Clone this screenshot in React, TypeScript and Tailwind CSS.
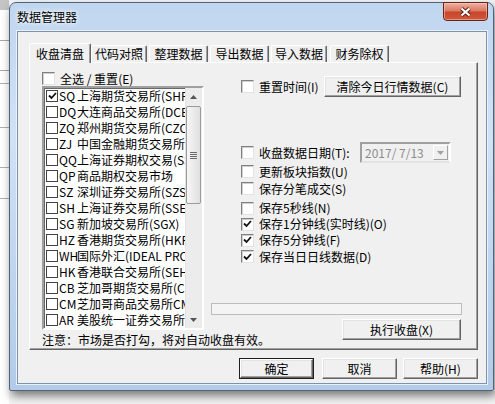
import type { ReactNode } from "react";

const markets: [string, string, boolean][] = [
  ["SQ", "上海期货交易所(SHFE)", true],
  ["DQ", "大连商品交易所(DCE)", false],
  ["ZQ", "郑州期货交易所(CZCE)", false],
  ["ZJ", "中国金融期货交易所(CFFEX)", false],
  ["QQ", "上海证券期权交易(SSE)", false],
  ["QP", "商品期权交易市场", false],
  ["SZ", "深圳证券交易所(SZSE)", false],
  ["SH", "上海证券交易所(SSE)", false],
  ["SG", "新加坡交易所(SGX)", false],
  ["HZ", "香港期货交易所(HKFE)", false],
  ["WH", "国际外汇(IDEAL PRO)", false],
  ["HK", "香港联合交易所(SEHK)", false],
  ["CB", "芝加哥期货交易所(CBOT)", false],
  ["CM", "芝加哥商品交易所CME", false],
  ["AR", "美股统一证券交易所", false],
];

const tabs = [
  { label: "代码对照", cls: "w-[56px]" },
  { label: "整理数据", cls: "ml-[2px] w-[59px]" },
  { label: "导出数据", cls: "ml-[2px] w-[59px]" },
  { label: "导入数据", cls: "ml-[2px] w-[56px]" },
  { label: "财务除权", cls: "ml-[3px] w-[59px]" },
];

function Tick() {
  return (
    <svg width="9" height="8" viewBox="0 0 9 8">
      <path d="M1 3.5 L3.5 6 L8 1" fill="none" stroke="#111" strokeWidth="1.8" />
    </svg>
  );
}

function Box3D({ checked }: { checked?: boolean }) {
  return (
    <span className="flex h-[13px] w-[13px] shrink-0 items-center justify-center border border-t-[#808080] border-l-[#808080] border-r-[#e3e3e3] border-b-[#e3e3e3] bg-white shadow-[inset_1px_1px_0_#d0d0d0]">
      {checked && <Tick />}
    </span>
  );
}

function Btn({ children, className = "" }: { children: ReactNode; className?: string }) {
  return (
    <div
      className={`flex items-center justify-center whitespace-nowrap border border-t-white border-l-white border-r-[#646464] border-b-[#646464] bg-[#f0f0f0] shadow-[inset_-1px_-1px_0_#a0a0a0,inset_1px_1px_0_#e3e3e3] ${className}`}
    >
      {children}
    </div>
  );
}

function Opt({ label, checked, cls }: { label: string; checked?: boolean; cls: string }) {
  return (
    <div className={`flex items-center ${cls}`}>
      <Box3D checked={checked} />
      <span className="ml-[5px] whitespace-nowrap">{label}</span>
    </div>
  );
}

function Arrow({ up, color = "#555" }: { up?: boolean; color?: string }) {
  return (
    <svg width="7" height="4" viewBox="0 0 7 4">
      <path d={up ? "M0 4 L3.5 0 L7 4 Z" : "M0 0 L7 0 L3.5 4 Z"} fill={color} />
    </svg>
  );
}

export default function App() {
  return (
    <div className="flex h-[404px] w-[495px] overflow-hidden bg-[#f4f4f4] font-['Noto_Sans_CJK_SC','Noto_Sans',sans-serif] text-[12px] leading-[14px] text-black">
      {/* window behind */}
      <div className="flex h-full w-[9px] shrink-0 flex-col bg-white">
        <div className="h-[10px] bg-[#c4c4c4]" />
        <div className="mt-[30px] h-px bg-[#a8a8a8]" />
        <div className="mt-[29px] h-px bg-[#a8a8a8]" />
        <div className="mt-[12px] h-px bg-[#b0b0b0]" />
        <div className="mt-[43px] h-px bg-[#b0b0b0]" />
        <div className="mt-[39px] h-px bg-[#b0b0b0]" />
        <div className="mt-[30px] h-px bg-[#b0b0b0]" />
      </div>

      <div className="pt-[2px]">
        <div className="flex h-[389px] w-[485px] flex-col rounded-t-[7px] rounded-b-[2px] border border-[#4f6379] bg-[linear-gradient(180deg,#c0d6ef_0%,#d0e2f5_35%,#bfd5ee_70%,#b3cbe8_100%)] shadow-[2px_5px_10px_rgba(0,0,0,0.5)]">
          {/* title bar */}
          <div className="flex h-[28px] shrink-0 items-start">
            <span className="ml-[7px] mt-[7px] [text-shadow:0_0_6px_#fff,0_0_3px_#fff]">数据管理器</span>
            <div className="ml-auto mr-[5px] -mt-px flex h-[19px] w-[45px] items-center justify-center rounded-b-[4px] border border-[#6b2414] bg-[linear-gradient(180deg,#eab1a3_0%,#dc7a63_45%,#c8452c_55%,#d0583c_100%)] shadow-[inset_0_0_0_1px_rgba(255,210,200,0.5)]">
              <svg width="13" height="10" viewBox="0 0 13 10">
                <path d="M2.5 1.5 L10.5 8.5 M10.5 1.5 L2.5 8.5" stroke="#5a1d12" strokeWidth="4" />
                <path d="M2.5 1.5 L10.5 8.5 M10.5 1.5 L2.5 8.5" stroke="#fff" strokeWidth="2.2" />
              </svg>
            </div>
          </div>

          {/* client */}
          <div className="ml-[7px] mr-[6px] flex h-[353px] flex-col border border-[#7d92ad] bg-[#f0f0f0] pl-[11px] pt-[11px] shadow-[0_0_0_1px_#e8f0fa]">
            <div className="w-[449px]">
              {/* tab strip */}
              <div className="flex h-[19px] items-end">
                <div className="relative z-10 -mb-px flex h-[20px] w-[62px] items-center justify-center rounded-t-[2px] border border-b-0 border-t-white border-l-white border-r-[#646464] bg-[#f0f0f0] pt-px shadow-[inset_-1px_0_0_#a0a0a0]">
                  收盘清盘
                </div>
                {tabs.map((t) => (
                  <div
                    key={t.label}
                    className={`flex h-[17px] items-center justify-center rounded-t-[2px] border border-b-0 border-t-white border-l-white border-r-[#646464] bg-[#f0f0f0] shadow-[inset_-1px_0_0_#a0a0a0] ${t.cls}`}
                  >
                    {t.label}
                  </div>
                ))}
              </div>

              {/* panel */}
              <div className="flex h-[288px] border border-t-white border-l-white border-r-[#646464] border-b-[#646464] shadow-[inset_-1px_-1px_0_#a0a0a0]">
                {/* left column */}
                <div className="ml-[12px] flex w-[162px] flex-col">
                  <div className="mt-[8px] flex h-[15px] items-center">
                    <Box3D />
                    <span className="ml-[5px] whitespace-nowrap">
                      <span className="underline underline-offset-2">全选</span> / <span className="underline underline-offset-2">重置</span>(E)
                    </span>
                  </div>
                  <div className="flex h-[244px] w-[162px] border-2 border-t-[#a0a0a0] border-l-[#a0a0a0] border-r-white border-b-white bg-white shadow-[inset_1px_1px_0_#696969]">
                    <div className="w-[141px] overflow-hidden pl-px">
                      {markets.map(([code, name, on]) => (
                        <div key={code} className="flex h-[16px] items-center whitespace-nowrap">
                          <span className="ml-px flex h-[12px] w-[12px] shrink-0 items-center justify-center border border-[#444] bg-white">
                            {on && <Tick />}
                          </span>
                          <span className="w-[19px] shrink-0 pl-px">{code}</span>
                          <span>{name}</span>
                        </div>
                      ))}
                    </div>
                    {/* scrollbar */}
                    <div className="flex w-[17px] flex-col items-center bg-[#ececec] shadow-[inset_1px_0_0_#e2e2e2]">
                      <div className="flex h-[17px] items-center justify-center">
                        <Arrow up />
                      </div>
                      <div className="mt-px flex h-[98px] w-[15px] flex-col items-center justify-center gap-[1px] rounded-[2px] border border-[#9b9b9b] bg-[linear-gradient(90deg,#f6f6f6,#e0e0e0)]">
                        <div className="h-px w-[7px] bg-[#6a6a6a]" />
                        <div className="h-px w-[7px] bg-[#6a6a6a]" />
                        <div className="h-px w-[7px] bg-[#6a6a6a]" />
                        <div className="h-px w-[7px] bg-[#6a6a6a]" />
                      </div>
                      <div className="mt-auto flex h-[17px] items-center justify-center">
                        <Arrow />
                      </div>
                    </div>
                  </div>
                  <div className="mt-[2px] flex h-[16px] items-center whitespace-nowrap">注意：市场是否打勾，将对自动收盘有效。</div>
                </div>

                {/* right area */}
                <div className="ml-[7px] flex w-[251px] flex-col">
                  <div className="mt-[13px] flex h-[21px] items-center pl-[30px]">
                    <Box3D />
                    <span className="ml-[5px] whitespace-nowrap">重置时间(I)</span>
                    <Btn className="ml-auto mr-px h-[21px] w-[137px]">清除今日行情数据(C)</Btn>
                  </div>

                  <div className="mt-[45px] flex h-[21px] items-center pl-[30px]">
                    <Box3D />
                    <span className="ml-[5px] w-[96px] whitespace-nowrap">收盘数据日期(T):</span>
                    <div className="ml-[5px] flex h-[21px] w-[91px] items-center border-2 border-t-[#a0a0a0] border-l-[#a0a0a0] border-r-white border-b-[#e3e3e3] bg-[#f0f0f0] p-px">
                      <span className="ml-[2px] text-[#8c8c8c]">2017/ 7/13</span>
                      <div className="ml-auto flex h-full w-[15px] items-center justify-center border border-t-white border-l-white border-r-[#a0a0a0] border-b-[#a0a0a0] bg-[#f0f0f0]">
                        <Arrow color="#a0a0a0" />
                      </div>
                    </div>
                  </div>

                  <div className="pl-[30px]">
                    <Opt label="更新板块指数(U)" cls="h-[17px]" />
                    <Opt label="保存分笔成交(S)" cls="h-[17px]" />
                    <Opt label="保存5秒线(N)" cls="mt-[3px] h-[16px]" />
                    <Opt label="保存1分钟线(实时线)(O)" checked cls="h-[16px]" />
                    <Opt label="保存5分钟线(F)" checked cls="h-[16px]" />
                    <Opt label="保存当日日线数据(D)" checked cls="h-[17px]" />
                  </div>

                  <div className="mt-[38px] h-[12px] w-[251px] border border-[#bcbcbc] bg-[#f4f4f4]" />
                  <Btn className="mt-[4px] mr-px h-[21px] w-[119px] self-end">执行收盘(X)</Btn>
                </div>
              </div>

              {/* dialog buttons */}
              <div className="mt-[8px] flex justify-end">
                <div className="flex h-[21px] w-[75px] border border-[#1e1e1e]">
                  <Btn className="h-full w-full">确定</Btn>
                </div>
                <Btn className="ml-[8px] h-[21px] w-[75px]">取消</Btn>
                <Btn className="ml-[6px] h-[21px] w-[75px]">帮助(H)</Btn>
              </div>
            </div>
          </div>
        </div>
      </div>
    </div>
  );
}
